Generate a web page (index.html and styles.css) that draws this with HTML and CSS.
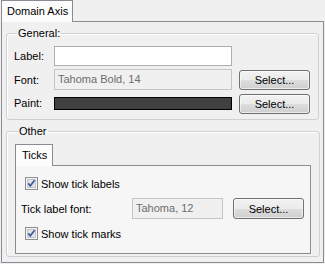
FILE: index.html
```html
<!DOCTYPE html>
<html lang="en">
<head>
  <meta charset="utf-8">
  <title>Domain Axis</title>
  <link rel="stylesheet" href="styles.css">
</head>
<body>
  <div class="tabbar">
    <div class="tab main-tab">Domain Axis</div>
  </div>
  <div class="pane">
    <fieldset class="group general">
      <legend>General:</legend>
      <div class="grid">
        <span class="lbl">Label:</span>
        <div class="field edit"></div>
        <span></span>

        <span class="lbl">Font:</span>
        <div class="field disabled">Tahoma Bold, 14</div>
        <button class="btn">Select...</button>

        <span class="lbl">Paint:</span>
        <div class="swatch"></div>
        <button class="btn">Select...</button>
      </div>
    </fieldset>

    <fieldset class="group other">
      <legend>Other</legend>
      <div class="tabbar">
        <div class="tab sub-tab">Ticks</div>
      </div>
      <div class="subpane">
        <div class="check">
          <svg class="box" width="13" height="13" viewBox="0 0 13 13">
            <rect x="0.5" y="0.5" width="12" height="12" fill="#f4f4f4" stroke="#8e8f8f"/>
            <rect x="2.5" y="2.5" width="8" height="8" fill="#e2e4e8" stroke="#c4c6cc"/>
            <path d="M3.3 6.4 L5.3 8.8 L9.6 3.2" fill="none" stroke="#3f5a9a" stroke-width="1.7"/>
          </svg>
          <span>Show tick labels</span>
        </div>
        <div class="fontrow">
          <span class="lbl">Tick label font:</span>
          <div class="field disabled">Tahoma, 12</div>
          <button class="btn">Select...</button>
        </div>
        <div class="check">
          <svg class="box" width="13" height="13" viewBox="0 0 13 13">
            <rect x="0.5" y="0.5" width="12" height="12" fill="#f4f4f4" stroke="#8e8f8f"/>
            <rect x="2.5" y="2.5" width="8" height="8" fill="#e2e4e8" stroke="#c4c6cc"/>
            <path d="M3.3 6.4 L5.3 8.8 L9.6 3.2" fill="none" stroke="#3f5a9a" stroke-width="1.7"/>
          </svg>
          <span>Show tick marks</span>
        </div>
      </div>
    </fieldset>
  </div>
</body>
</html>
```

FILE: styles.css
```css
body {
  margin: 0;
  background: #f0f0f0;
  font-family: "Liberation Sans", Arial, sans-serif;
  font-size: 11px;
  color: #000;
}
.tabbar {
  display: flex;
  height: 21px;
}
.tab {
  box-sizing: border-box;
  height: 22px;
  border: 1px solid #898c95;
  border-bottom: none;
  background: #fcfcfc;
  line-height: 20px;
  position: relative;
  z-index: 1;
}
.main-tab {
  margin-left: 1px;
  width: 72px;
  padding-left: 5px;
}
.sub-tab {
  width: 38px;
  padding-left: 6px;
}
.pane {
  box-sizing: border-box;
  margin-left: 1px;
  width: 323px;
  height: 242px;
  border: 1px solid #898c95;
  padding: 4px 4px 0 4px;
}
.group {
  margin: 0;
  border: 1px solid #d0d0d0;
  border-radius: 3px;
  box-shadow: inset 1px 1px 0 #fff;
}
.group legend {
  padding: 0 1px;
  margin-left: 3px;
  line-height: 14px;
}
.general {
  padding: 6px 7px 6px 7px;
}
.grid {
  display: grid;
  grid-template-columns: 40px 178px 78px;
  grid-template-rows: 20px 21px 20px;
  row-gap: 3px;
  align-items: center;
}
.grid .btn {
  justify-self: end;
  width: 71px;
  height: 20px;
}
.grid .btn:last-child {
  margin-top: 1px;
}
.field {
  box-sizing: border-box;
  height: 100%;
  padding-left: 3px;
  line-height: 19px;
}
.edit {
  background: #fff;
  border: 1px solid #abadb3;
}
.disabled {
  background: #f0f0f0;
  border: 1px solid #c5c5c5;
  color: #6d6d6d;
}
.swatch {
  box-sizing: border-box;
  height: 13px;
  background: #404040;
  border: 1px solid #000;
}
.btn {
  box-sizing: border-box;
  height: 21px;
  margin: 0;
  padding: 0;
  border: 1px solid #707070;
  border-radius: 3px;
  background: linear-gradient(#f2f2f2 0%, #ebebeb 50%, #dddddd 51%, #cfcfcf 100%);
  font: inherit;
  color: #000;
  box-shadow: inset 0 0 0 1px rgba(255, 255, 255, 0.6);
}
.other {
  margin-top: 4px;
  padding: 6px 8px 2px 8px;
}
.subpane {
  box-sizing: border-box;
  height: 89px;
  border: 1px solid #898c95;
  background: #f6f6f6;
  padding: 11px 6px 0 5px;
}
.check {
  display: flex;
  align-items: center;
  gap: 3px;
  height: 13px;
  margin-left: 4px;
}
.box {
  flex: none;
}
.fontrow {
  display: grid;
  grid-template-columns: 111px 91px 81px;
  height: 21px;
  align-items: center;
  margin: 8px 0;
}
.fontrow .field {
  height: 21px;
}
.fontrow .btn {
  justify-self: end;
  width: 71px;
}
```
